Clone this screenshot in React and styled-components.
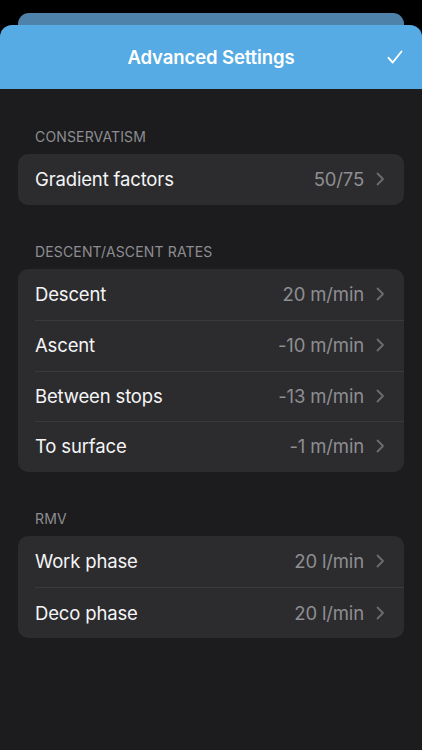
import styled, { createGlobalStyle } from "styled-components";

const GlobalStyle = createGlobalStyle`
  html, body {
    margin: 0;
    padding: 0;
    background: #000;
    font-family: Inter, "Noto Sans", "Liberation Sans", sans-serif;
    -webkit-font-smoothing: antialiased;
  }
`;

const sections = [
  {
    title: "Conservatism",
    rows: [{ label: "Gradient factors", value: "50/75" }],
  },
  {
    title: "Descent/Ascent rates",
    rows: [
      { label: "Descent", value: "20 m/min" },
      { label: "Ascent", value: "-10 m/min" },
      { label: "Between stops", value: "-13 m/min" },
      { label: "To surface", value: "-1 m/min" },
    ],
  },
  {
    title: "RMV",
    rows: [
      { label: "Work phase", value: "20 l/min" },
      { label: "Deco phase", value: "20 l/min" },
    ],
  },
];

function Chevron() {
  return (
    <svg width="9" height="14" viewBox="0 0 9 14" fill="none">
      <path
        d="M1.5 1.5L7 7l-5.5 5.5"
        stroke="#6c6c71"
        strokeWidth="1.8"
        strokeLinecap="round"
        strokeLinejoin="round"
      />
    </svg>
  );
}

function Check() {
  return (
    <svg width="16" height="14" viewBox="0 0 16 14" fill="none">
      <path
        d="M1.5 7.8l4.2 4.7L14.5 1.5"
        stroke="#fff"
        strokeWidth="1.9"
        strokeLinecap="round"
        strokeLinejoin="round"
      />
    </svg>
  );
}

export default function App() {
  return (
    <>
      <GlobalStyle />
      <Screen>
        <BackSheet />
        <Sheet>
          <Header>
            <Title>Advanced Settings</Title>
            <Done>
              <Check />
            </Done>
          </Header>
          <Content>
            {sections.map((s) => (
              <Section key={s.title}>
                <SectionTitle>{s.title}</SectionTitle>
                <Card>
                  {s.rows.map((r) => (
                    <Row key={r.label}>
                      <Label>{r.label}</Label>
                      <Value>{r.value}</Value>
                      <Chevron />
                    </Row>
                  ))}
                </Card>
              </Section>
            ))}
          </Content>
        </Sheet>
      </Screen>
    </>
  );
}

const Screen = styled.div`
  width: 422px;
  height: 750px;
  background: #000;
  padding-top: 13px;
  box-sizing: border-box;
  display: flex;
  flex-direction: column;
  overflow: hidden;
`;

const BackSheet = styled.div`
  height: 12px;
  margin: 0 18px;
  background: #4f82ab;
  border-radius: 11px 11px 0 0;
`;

const Sheet = styled.div`
  flex: 1;
  background: #1c1c1e;
  border-radius: 12px 12px 0 0;
  overflow: hidden;
  display: flex;
  flex-direction: column;
`;

const Header = styled.div`
  height: 64px;
  background: #56abe4;
  display: flex;
  align-items: center;
  justify-content: center;
  position: relative;
`;

const Title = styled.div`
  color: #fff;
  font-size: 18.5px;
  font-weight: 600;
  letter-spacing: -0.1px;
`;

const Done = styled.div`
  position: absolute;
  right: 19px;
  top: 25px;
  display: flex;
`;

const Content = styled.div`
  padding: 38.5px 18px 0;
  display: flex;
  flex-direction: column;
  gap: 38.5px;
`;

const Section = styled.div`
  display: flex;
  flex-direction: column;
`;

const SectionTitle = styled.div`
  text-transform: uppercase;
  color: #8d8d92;
  font-size: 14px;
  line-height: 18px;
  padding-left: 17px;
  margin-bottom: 8px;
  letter-spacing: 0.15px;
`;

const Card = styled.div`
  background: #2c2c2e;
  border-radius: 10px;
  overflow: hidden;
  display: flex;
  flex-direction: column;
`;

const Row = styled.div`
  height: 51px;
  box-sizing: border-box;
  display: flex;
  align-items: center;
  padding: 0 19px 1px 17px;

  & + & {
    border-top: 1px solid #3a3a3c;
    margin-left: 17px;
    padding-left: 0;
    height: 50.6px;
  }
`;

const Label = styled.div`
  flex: 1;
  color: #f5f5f7;
  font-size: 18.5px;
  letter-spacing: -0.15px;
`;

const Value = styled.div`
  color: #8e8e93;
  font-size: 18.5px;
  letter-spacing: -0.15px;
  margin-right: 12px;
`;
